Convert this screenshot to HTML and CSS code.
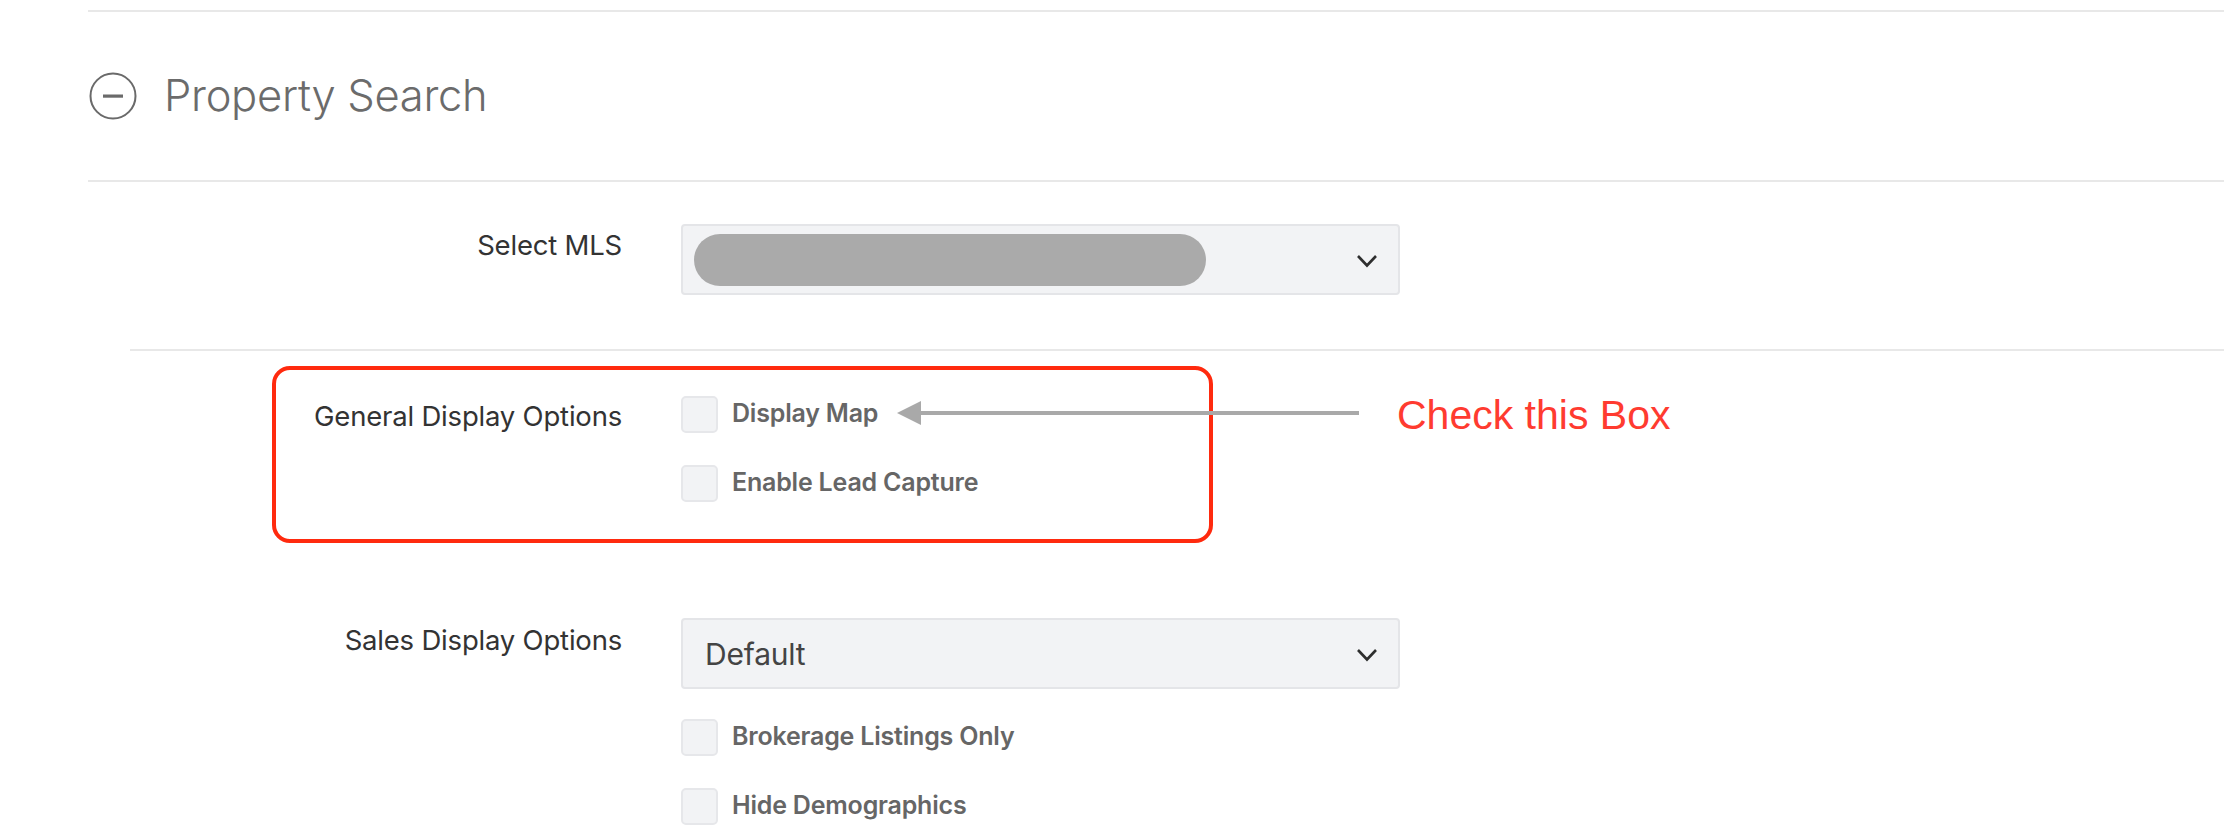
FILE: index.html
```html
<!DOCTYPE html>
<html lang="en">
<head>
<meta charset="utf-8">
<title>Property Search</title>
<link rel="stylesheet" href="styles.css">
</head>
<body>
<div class="page">
  <div class="rule rule-top"></div>
  <div class="section-head">
    <svg class="toggle" width="48" height="48" viewBox="0 0 48 48" aria-hidden="true">
      <circle cx="24" cy="24" r="22.5" fill="none" stroke="#6a6a6a" stroke-width="2"/>
      <rect x="14" y="22.5" width="20" height="3.2" fill="#6a6a6a"/>
    </svg>
    <h2 class="section-title">Property Search</h2>
  </div>
  <div class="rule"></div>

  <div class="form">
    <div class="row row-mls">
      <div class="label">Select MLS</div>
      <div class="control">
        <div class="select">
          <span class="redacted"></span>
          <svg class="chev" width="22" height="14" viewBox="0 0 22 14"><path d="M2 2 L11 11.5 L20 2" fill="none" stroke="#2e2e2e" stroke-width="2.6"/></svg>
        </div>
      </div>
    </div>

    <div class="rule rule-inner"></div>

    <div class="row row-general">
      <div class="label">General Display Options</div>
      <div class="control checks">
        <label class="check"><span class="box"></span><span class="check-text">Display Map</span></label>
        <label class="check"><span class="box"></span><span class="check-text">Enable Lead Capture</span></label>
      </div>
    </div>

    <div class="row row-sales">
      <div class="label">Sales Display Options</div>
      <div class="control">
        <div class="select">
          <span class="select-value">Default</span>
          <svg class="chev" width="22" height="14" viewBox="0 0 22 14"><path d="M2 2 L11 11.5 L20 2" fill="none" stroke="#2e2e2e" stroke-width="2.6"/></svg>
        </div>
        <div class="checks checks-sales">
          <label class="check"><span class="box"></span><span class="check-text">Brokerage Listings Only</span></label>
          <label class="check"><span class="box"></span><span class="check-text">Hide Demographics</span></label>
        </div>
      </div>
    </div>
  </div>

  <div class="callout-box"></div>
  <svg class="callout-arrow" width="466" height="30" viewBox="0 0 466 30" aria-hidden="true">
    <rect x="24" y="13" width="440" height="4" fill="#a9a9a9"/>
    <polygon points="2,15 26,3 26,27" fill="#a9a9a9"/>
  </svg>
  <div class="callout-text">Check this Box</div>
</div>
</body>
</html>
```

FILE: styles.css
```css
* { box-sizing: border-box; }

html, body {
  margin: 0;
  padding: 0;
  background: #ffffff;
}

body {
  font-family: Inter, "Liberation Sans", Arial, sans-serif;
  color: #333333;
  overflow: hidden;
}

.page {
  position: relative;
  width: 2224px;
  height: 826px;
  padding-top: 10px;
  padding-left: 88px;
}

.rule {
  height: 2px;
  background: #e8e8e8;
}

.section-head {
  display: flex;
  align-items: center;
  height: 168px;
  padding-left: 1px;
}

.toggle {
  flex: none;
  display: block;
}

.section-title {
  margin: 0 0 0 27px;
  font-family: Inter, "Liberation Sans", sans-serif;
  font-weight: 300;
  font-size: 43.5px;
  line-height: 1;
  color: #6b6b6b;
  letter-spacing: -0.3px;
}

.form {
  margin-left: 42px;
}

.row {
  display: grid;
  grid-template-columns: 492px 719px;
  column-gap: 59px;
  align-items: start;
}

.label {
  font-size: 27.5px;
  line-height: 36px;
  padding-top: 3px;
  text-align: right;
  color: #333333;
  letter-spacing: -0.2px;
}

.row-mls {
  margin-top: 42px;
}

.rule-inner {
  margin-top: 54px;
}

.select {
  display: flex;
  align-items: center;
  justify-content: space-between;
  height: 71px;
  padding: 0 20px 0 11px;
  background: #f2f3f5;
  border: 2px solid #e4e5e8;
  border-radius: 4px;
}

.redacted {
  display: block;
  width: 512px;
  height: 52px;
  background: #aaaaaa;
  border-radius: 26px / 26px;
}

.select-value {
  padding-left: 11px;
  font-size: 30px;
  color: #444444;
  letter-spacing: -0.2px;
}

.chev {
  display: block;
  flex: none;
  margin-top: 2px;
}

.row-general {
  margin-top: 45px;
}

.row-general .label {
  padding-top: 2px;
}

.checks {
  display: flex;
  flex-direction: column;
  gap: 32px;
}

.check {
  display: flex;
  align-items: center;
  gap: 14px;
  height: 37px;
}

.box {
  flex: none;
  width: 37px;
  height: 37px;
  background: #f2f3f5;
  border: 2px solid #e6e7ea;
  border-radius: 5px;
}

.check-text {
  font-size: 25px;
  font-weight: 600;
  color: #666666;
  letter-spacing: -0.2px;
  padding-bottom: 3px;
}

.row-sales {
  margin-top: 116px;
}

.row-sales .label {
  padding-top: 4px;
}

.checks-sales {
  margin-top: 30px;
}

/* annotation overlays */
.callout-box {
  position: absolute;
  left: 272px;
  top: 366px;
  width: 941px;
  height: 177px;
  border: 4px solid #ff2a0e;
  border-radius: 18px;
}

.callout-arrow {
  position: absolute;
  left: 895px;
  top: 398px;
}

.callout-text {
  position: absolute;
  left: 1397px;
  top: 390px;
  font-family: "Liberation Sans", Arial, sans-serif;
  font-size: 41px;
  line-height: 50px;
  color: #ff3b30;
}
```
